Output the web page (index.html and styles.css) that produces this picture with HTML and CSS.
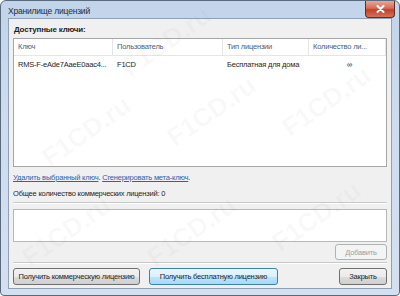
FILE: index.html
```html
<!DOCTYPE html>
<html lang="ru">
<head>
  <meta charset="UTF-8" />
  <title>Хранилище лицензий</title>
  <link rel="stylesheet" href="styles.css">
</head>
<body>
  <div class="window">
    <div class="titlebar">
      <span class="title">Хранилище лицензий</span>
      <button class="close" aria-label="Закрыть">
        <svg width="9" height="8" viewBox="0 0 9 8">
          <path d="M1.5 1 L7.5 7 M7.5 1 L1.5 7" stroke="#fff" stroke-width="2" stroke-linecap="round"/>
        </svg>
      </button>
    </div>

    <div class="client">
      <div class="keys">
        <div class="keys-title">Доступные ключи:</div>
        <div class="list">
          <div class="list-head">
            <span class="c1">Ключ</span>
            <span class="c2">Пользователь</span>
            <span class="c3">Тип лицензии</span>
            <span class="c4">Количество ли...</span>
          </div>
          <div class="list-row">
            <span class="c1">RMS-F-eAde7AaeE0aac4...</span>
            <span class="c2">F1CD</span>
            <span class="c3">Бесплатная для дома</span>
            <span class="c4 center">∞</span>
          </div>
        </div>
      </div>

      <div class="links">
        <a href="#">Удалить выбранный ключ</a>. <a href="#">Сгенерировать мета-ключ</a>.
      </div>
      <div class="total">Общее количество коммерческих лицензий: 0</div>
      <hr class="sep" />

      <div class="input-box"></div>
      <div class="add-row">
        <button class="btn add" disabled>Добавить</button>
      </div>
      <hr class="sep sep-low" />

      <div class="bottom-row">
        <button class="btn buy">Получить коммерческую лицензию</button>
        <button class="btn default">Получить бесплатную лицензию</button>
        <button class="btn close-btn">Закрыть</button>
      </div>
    </div>

    <div class="watermark w1">F1CD.ru</div>
    <div class="watermark w2">F1CD.ru</div>
    <div class="watermark w3">F1CD.ru</div>
    <div class="watermark w4">F1CD.ru</div>
    <div class="watermark w5">F1CD.ru</div>
    <div class="watermark w6">F1CD.ru</div>
    <div class="watermark w7">F1CD.ru</div>
  </div>
</body>
</html>
```

FILE: styles.css
```css
body {
  margin: 0;
  padding: 0;
  font-family: 'Liberation Sans', Arial, sans-serif;
  font-size: 7.5px;
  letter-spacing: -0.2px;
  color: #1e1e1e;
  background: #ffffff;
}
.window {
  position: relative;
  width: 400px;
  height: 296px;
  box-sizing: border-box;
  border: 1px solid #5a6a7e;
  border-radius: 6px 6px 4px 4px;
  background: linear-gradient(to bottom, #c2d4ea, #cfdcee 40%, #d4e0f0);
  display: flex;
  flex-direction: column;
  overflow: hidden;
}
.titlebar {
  height: 21px;
  display: flex;
  justify-content: space-between;
  align-items: flex-start;
  padding-left: 7px;
}
.title {
  font-size: 8.5px;
  color: #1e2a3a;
  margin-top: 5px;
}
.close {
  width: 30px;
  height: 17px;
  margin-right: 4px;
  border: 1px solid #6a2a20;
  border-top: none;
  border-radius: 0 0 4px 4px;
  background: linear-gradient(to bottom, #e9a797, #d36d55 45%, #c0402a 55%, #d4735a);
  display: flex;
  align-items: center;
  justify-content: center;
  padding: 0;
}
.client {
  flex: 1;
  margin: 0 7px 7px;
  border: 1px solid #8ea1b8;
  background: #f0f0f0;
  padding: 3px 4px 3px;
  display: flex;
  flex-direction: column;
}
.keys-title {
  font-weight: bold;
  font-size: 8px;
  padding: 3px 1px 4px;
}
.list {
  height: 127px;
  background: #fff;
  border: 1px solid #a6a6a6;
}
.list-head, .list-row {
  display: grid;
  grid-template-columns: 99px 110px 86px 1fr;
  white-space: nowrap;
}
.list-head {
  height: 16px;
  border-bottom: 1px solid #e5e5e5;
  color: #4c607a;
}
.list-head span {
  border-right: 1px solid #e5e5e5;
  padding-left: 4px;
  line-height: 16px;
}
.list-row {
  height: 16px;
  align-items: center;
}
.list-row span {
  padding-left: 4px;
}
.center {
  text-align: center;
}
.links {
  margin-top: 6px;
}
.links a {
  color: #2a62b0;
}
.total {
  margin-top: 7px;
}
.sep {
  border: none;
  border-top: 1px solid #c8c8c8;
  border-bottom: 1px solid #fff;
  margin: 4px 0 5px;
}
.sep-low {
  margin: 2px 0 4px;
}
.input-box {
  height: 31px;
  background: #fff;
  border: 1px solid #b8b8b8;
}
.add-row {
  display: flex;
  justify-content: flex-end;
  margin-top: 2px;
}
.btn {
  font-family: inherit;
  font-size: 7.5px;
  letter-spacing: -0.2px;
  white-space: nowrap;
  color: #1e1e1e;
  height: 16px;
  padding: 0;
  border: 1px solid #707070;
  border-radius: 3px;
  background: linear-gradient(to bottom, #f2f2f2, #ebebeb 50%, #dddddd 50%, #cfcfcf);
}
.btn.add {
  width: 52px;
  height: 16px;
  color: #a0a0a0;
  border-color: #adb2b5;
  background: #f4f4f4;
}
.bottom-row {
  display: flex;
  gap: 9px;
}
.bottom-row .btn {
  height: 17px;
}
.btn.buy {
  width: 127px;
}
.btn.default {
  width: 129px;
  border-color: #3c7fb1;
  background: linear-gradient(to bottom, #eaf6fd, #d9f0fc 50%, #bee6fd 50%, #a7d9f5);
}
.close-btn {
  margin-left: auto;
  width: 48px;
}
.watermark {
  position: absolute;
  font-weight: bold;
  font-size: 26px;
  letter-spacing: 0;
  color: rgba(150, 150, 150, 0.06);
  transform: rotate(-35deg);
  pointer-events: none;
}
.w1 { left: 35px; top: 115px; }
.w2 { left: 160px; top: 95px; }
.w3 { left: 275px; top: 85px; }
.w4 { left: 15px; top: 215px; }
.w5 { left: 140px; top: 215px; }
.w6 { left: 265px; top: 200px; }
.w7 { left: 115px; top: 25px; }
```
